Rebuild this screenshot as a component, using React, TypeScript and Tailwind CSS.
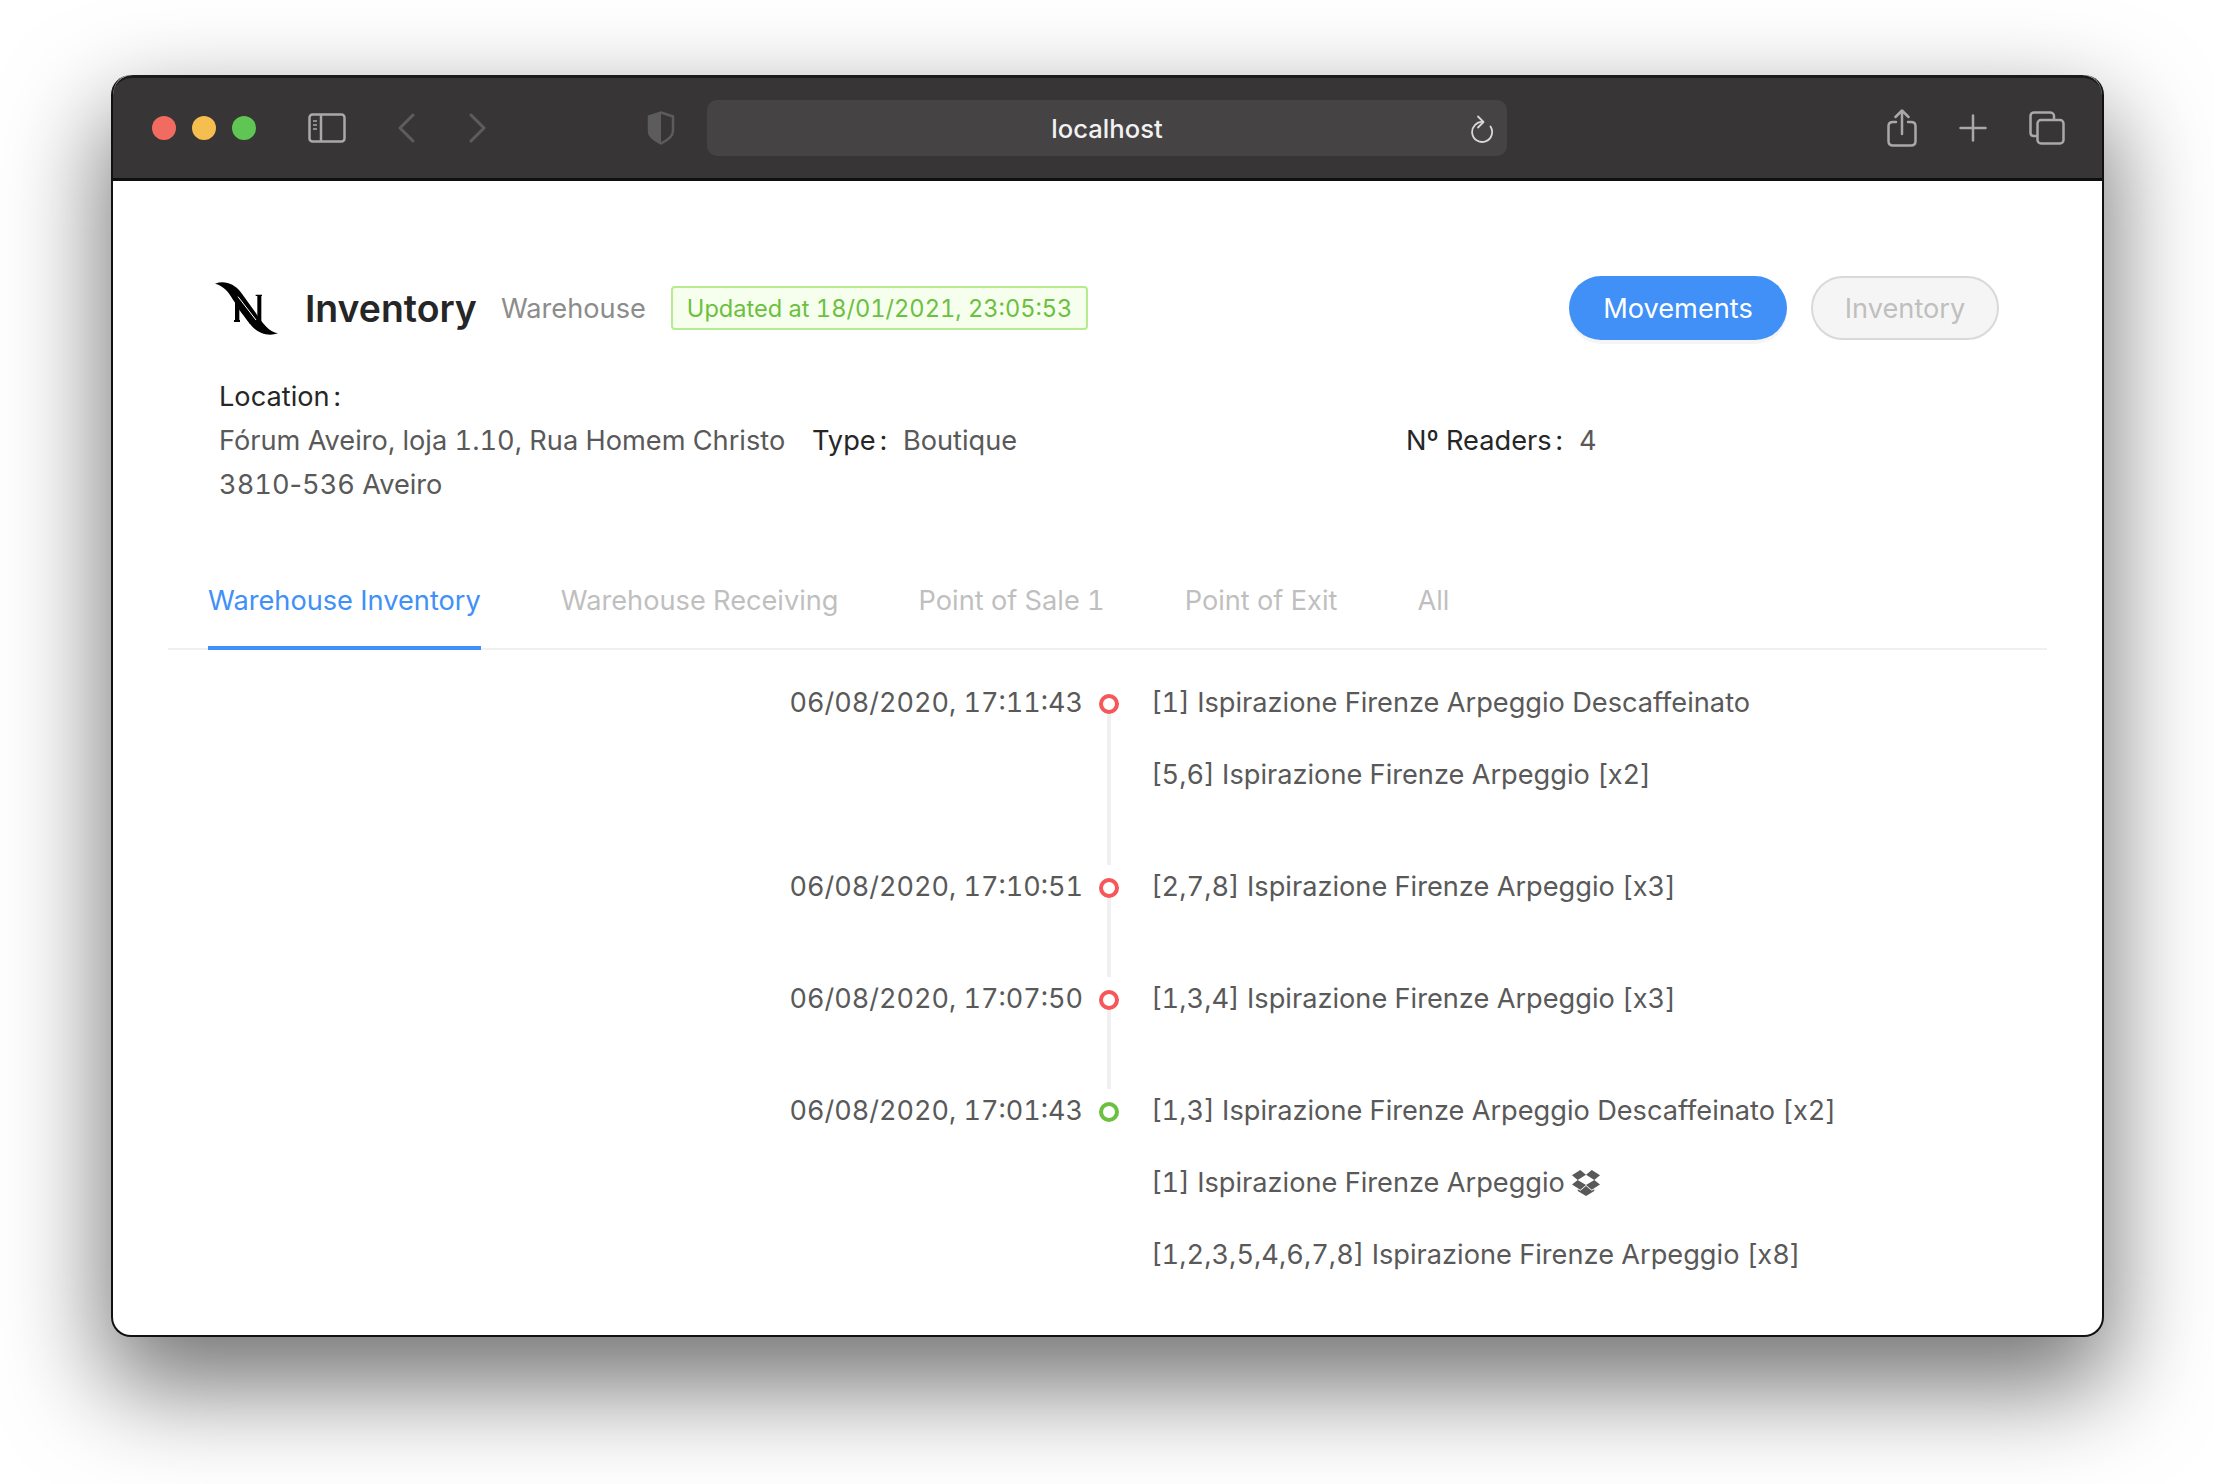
import { AiOutlineDropbox } from "react-icons/ai";

const tabs = ["Warehouse Inventory", "Warehouse Receiving", "Point of Sale 1", "Point of Exit", "All"];

const movements = [
  { date: "06/08/2020, 17:11:43", color: "border-[#f5575a]", lines: ["[1] Ispirazione Firenze Arpeggio Descaffeinato", "[5,6] Ispirazione Firenze Arpeggio [x2]"] },
  { date: "06/08/2020, 17:10:51", color: "border-[#f5575a]", lines: ["[2,7,8] Ispirazione Firenze Arpeggio [x3]"] },
  { date: "06/08/2020, 17:07:50", color: "border-[#f5575a]", lines: ["[1,3,4] Ispirazione Firenze Arpeggio [x3]"] },
  {
    date: "06/08/2020, 17:01:43",
    color: "border-[#6cc03f]",
    lines: [
      "[1,3] Ispirazione Firenze Arpeggio Descaffeinato [x2]",
      "[1] Ispirazione Firenze Arpeggio",
      "[1,2,3,5,4,6,7,8] Ispirazione Firenze Arpeggio [x8]",
    ],
  },
];

function Logo() {
  return (
    <svg width="65" height="55" viewBox="30 25 195 165" className="shrink-0">
      <path d="M90 66 H108 V70 H106 V142 H108 V148 H90 V142 H93 V70 H90 Z M155 66 H174 V70 H172 V152 H160 V70 H155 Z" fill="#000" />
      <path d="M33 33 C60 22 90 32 110 58 L155 120 C174 150 195 178 222 182 C190 194 158 180 138 154 L86 80 C72 54 55 38 33 33 Z" fill="#000" />
      <path d="M97 80 L150 148 L138 154 L97 100 Z" fill="#000" />
      <path d="M102 72 L156 142" stroke="#fff" strokeWidth="3" fill="none" />
    </svg>
  );
}

function Toolbar() {
  return (
    <div className="h-[106px] flex items-center bg-[#373536] border-t-[3px] border-t-[#1c1b1c] border-b-[3px] border-b-[#0f0f0f] shrink-0 rounded-t-[20px] pl-[39px]">
      <div className="flex gap-[16px]">
        <span className="w-[24px] h-[24px] rounded-full bg-[#f26b60]" />
        <span className="w-[24px] h-[24px] rounded-full bg-[#f6bd4f]" />
        <span className="w-[24px] h-[24px] rounded-full bg-[#5fc653]" />
      </div>
      <svg width="38" height="30" viewBox="0 0 38 30" fill="none" className="ml-[52px]" stroke="#a9a9a9" strokeWidth="2.5">
        <rect x="1.500" y="1.500" width="35" height="27" rx="3" />
        <path d="M13 2 V28" />
        <path d="M5 8 H9 M5 12 H9 M5 16 H9" strokeWidth="1.5" />
      </svg>
      <svg width="20" height="30" viewBox="0 0 20 30" fill="none" className="ml-[50px]" stroke="#5e5d5e" strokeWidth="3" strokeLinecap="round" strokeLinejoin="round">
        <path d="M17 2 L4 15 L17 28" />
      </svg>
      <svg width="20" height="30" viewBox="0 0 20 30" fill="none" className="ml-[52px]" stroke="#5e5d5e" strokeWidth="3" strokeLinecap="round" strokeLinejoin="round">
        <path d="M3 2 L16 15 L3 28" />
      </svg>
      <svg width="28" height="34" viewBox="0 0 28 34" className="ml-[159px]">
        <path d="M14 1.500 L26 5.500 V20 C26 26 19 30 14 32.500 C9 30 2 26 2 20 V5.500 Z" fill="none" stroke="#5d5c5d" strokeWidth="2.5" />
        <path d="M14 1 L1 5 V20 C1 26 8 31 14 33 Z" fill="#5d5c5d" />
      </svg>
      <div className="ml-[32px] w-[800px] h-[56px] rounded-[10px] bg-[#454344] flex items-center justify-center relative text-[#f2f2f2] text-[25.6px] font-medium pt-[2px]">
        localhost
        <svg width="24" height="28" viewBox="0 0 24 28" fill="none" className="absolute right-[13px] top-[15px]" stroke="#d8d8d8" strokeWidth="1.8" strokeLinecap="round" strokeLinejoin="round">
          <path d="M13 7 A10 10 0 1 0 20.500 11.500" />
          <path d="M8 1.500 L13.500 7 L8 12.500" />
        </svg>
      </div>
      <svg width="30" height="38" viewBox="0 0 30 38" fill="none" className="ml-[380px]" stroke="#a9a9a9" strokeWidth="2.5" strokeLinecap="round" strokeLinejoin="round">
        <path d="M9 13 H6 C3 13 1.500 14.500 1.500 17 V32 C1.500 35 3 36.500 6 36.500 H24 C27 36.500 28.500 35 28.500 32 V17 C28.500 14.500 27 13 24 13 H21" />
        <path d="M15 25 V2 M8.500 8 L15 1.500 L21.500 8" />
      </svg>
      <svg width="28" height="28" viewBox="0 0 28 28" fill="none" className="ml-[42px]" stroke="#a9a9a9" strokeWidth="2.5" strokeLinecap="round">
        <path d="M14 1.500 V26.500 M1.500 14 H26.500" />
      </svg>
      <svg width="36" height="34" viewBox="0 0 36 34" fill="none" className="ml-[42px]" stroke="#a9a9a9" strokeWidth="2.500">
        <path d="M8 25 H5 C3 25 1.500 24 1.500 22 V5 C1.500 3 3 1.500 5 1.500 H21 C23 1.500 25 3 25 5 V9" />
        <rect x="8.500" y="9" width="26" height="23.500" rx="3.500" />
      </svg>
    </div>
  );
}

export default function App() {
  return (
    <div className="min-h-[1484px] bg-white font-['Inter',sans-serif] tabular-nums pt-[75px] pl-[111px] overflow-hidden">
      <div className="w-[1993px] h-[1262px] flex flex-col rounded-[20px] bg-white border-x-2 border-b-2 border-[#111] shadow-[0_44px_100px_6px_rgba(0,0,0,0.55)]">
        <Toolbar />
        <div className="flex-1 px-[55px] text-[27.2px] text-[#595959]">
          <div className="px-[51px] pt-[95px]">
            <div className="flex items-center h-[64px] -ml-[5px] -mr-[3px]">
              <Logo />
              <h1 className="ml-[26px] text-[37.4px] font-semibold text-[#262626] pt-[2px]">Inventory</h1>
              <span className="ml-[24px] text-[#8c8c8c] pt-[2px]">Warehouse</span>
              <span className="ml-[25px] h-[44px] px-[14px] pt-[2px] flex items-center rounded-[4px] border-2 border-[#b7eb8f] bg-[#f6ffed] text-[#6cc03f] text-[23.6px]">
                Updated at 18/01/2021, 23:05:53
              </span>
              <button className="ml-auto h-[64px] w-[218px] pt-[2px] rounded-full bg-[#4090f7] text-white shadow-[0_4px_0_rgba(0,0,0,0.04)]">Movements</button>
              <button className="ml-[24px] h-[64px] w-[188px] pt-[2px] rounded-full bg-[#f5f5f5] border-2 border-[#d9d9d9] text-[#bfbfbf]">Inventory</button>
            </div>
            <div className="mt-[35px] grid grid-cols-[593px_594px_1fr] leading-[44px]">
              <div className="col-span-3 text-[#262626]">
                Location<span className="ml-[4px]">:</span>
              </div>
              <div>
                Fórum Aveiro, loja 1.10, Rua Homem Christo
                <br />
                3810<span className="normal-nums">-</span>536 Aveiro
              </div>
              <div>
                <span className="text-[#262626]">
                  Type<span className="ml-[4px]">:</span>
                </span>
                <span className="ml-[16px]">Boutique</span>
              </div>
              <div>
                <span className="text-[#262626]">
                  Nº Readers<span className="ml-[4px]">:</span>
                </span>
                <span className="ml-[16px]">4</span>
              </div>
            </div>
          </div>
          <div className="mt-[72px] flex gap-[80px] border-b-2 border-[#f0f0f0] px-[40px]">
            {tabs.map((tab, i) => (
              <div
                key={tab}
                className={
                  i === 0
                    ? "pb-[23px] leading-[44px] -mb-[2px] border-b-[4px] border-[#4090f7] text-[#4090f7]"
                    : "pb-[23px] leading-[44px] text-[#bfbfbf]"
                }
              >
                {tab}
              </div>
            ))}
          </div>
          <div className="mt-[31px]">
            {movements.map((item, i) => (
              <div key={item.date} className="grid grid-cols-[917px_48px_1fr] pb-[68px] leading-[44px]">
                <div className="text-right text-[27px] pr-[2px]">{item.date}</div>
                <div className="relative flex justify-center">
                  <span className={"mt-[13px] w-[20px] h-[20px] rounded-full border-[4px] bg-white z-10 " + item.color} />
                  {i < movements.length - 1 && <span className="absolute top-[13px] -bottom-[68px] left-[22px] w-[4px] bg-[#f0f0f0]" />}
                </div>
                <div className="flex flex-col gap-[28px] pl-[18px]">
                  {item.lines.map((line) => (
                    <div key={line} className="flex items-center gap-[5px]">
                      {line}
                      {line === "[1] Ispirazione Firenze Arpeggio" && <AiOutlineDropbox className="text-[32px] text-[#595959]" />}
                    </div>
                  ))}
                </div>
              </div>
            ))}
          </div>
        </div>
      </div>
    </div>
  );
}
